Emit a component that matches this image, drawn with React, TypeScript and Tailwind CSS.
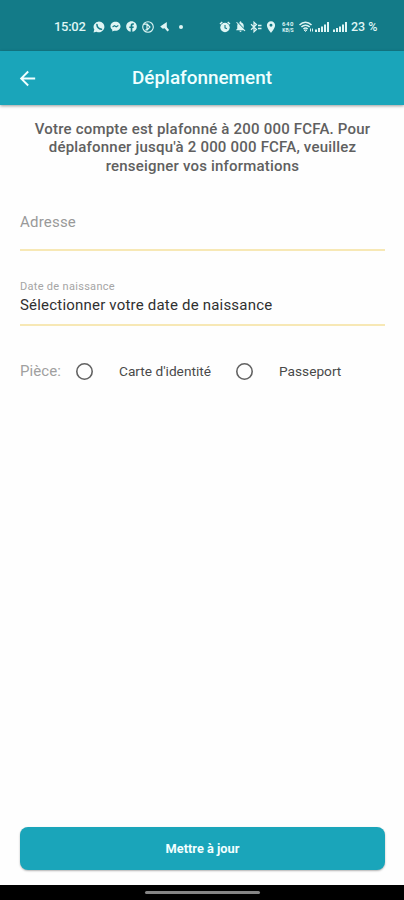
import React from 'react';
import {
  MdArrowBack,
  MdLocationOn,
  MdNotificationsOff,
} from 'react-icons/md';
import { FaFacebook } from 'react-icons/fa';

const SignalBars: React.FC = () => (
  <svg viewBox="0 0 15 10" className="w-[15px] h-[10px] shrink-0" fill="currentColor">
    <rect x="0" y="7.5" width="2" height="2.5" />
    <rect x="3" y="6" width="2" height="4" />
    <rect x="6" y="4.5" width="2" height="5.5" />
    <rect x="9" y="2.5" width="2" height="7.5" />
    <rect x="12" y="0" width="2" height="10" />
  </svg>
);

const StatusBar: React.FC = () => (
  <div className="h-[51px] shrink-0 bg-[#137b88] text-[#dff5f4] flex items-center pl-[54px] pt-[2px]">
    <span className="w-[39px] shrink-0 text-[13px] font-medium leading-none tracking-[-0.3px]">15:02</span>
    <div className="w-[126px] shrink-0 flex items-center gap-[5px]">
      {/* WhatsApp */}
      <svg viewBox="0 0 12 12" className="w-[12px] h-[12px]" fill="currentColor">
        <path d="M6 .5a5.4 5.4 0 1 1-2.5 10.2L.5 11.5l.8-2.9A5.4 5.4 0 0 1 6 .5z" />
        <path d="M3.9 3.4c.2 2.7 1.8 4.5 4.6 4.8" fill="none" stroke="#137b88" strokeWidth="1.5" strokeLinecap="round" />
      </svg>
      {/* Messenger */}
      <svg viewBox="0 0 12 12" className="w-[11px] h-[11px]" fill="currentColor">
        <path d="M6 .7c3.2 0 5.5 2.2 5.5 5s-2.3 5-5.5 5c-.6 0-1.1 0-1.6-.2l-1.9 1V9.600C1.200 8.700.5 7.300.5 5.700.5 2.900 2.800.7 6 .7z" />
        <path d="m2.8 6.6 2-1.500 2 1.200 2.300-1.300" fill="none" stroke="#137b88" strokeWidth="1.2" />
      </svg>
      <FaFacebook className="w-[11px] h-[11px]" />
      <svg viewBox="0 0 12 12" className="w-[12px] h-[12px]" fill="none" stroke="currentColor">
        <circle cx="6" cy="6" r="5.3" strokeWidth="1.1" />
        <path d="M2 3.2h3.2L7.900 6 5.200 8.800H3.400M5 3.800v4.400" strokeWidth="1.2" />
      </svg>
      <svg viewBox="0 0 12 12" className="w-[12px] h-[12px]" fill="currentColor">
        <path d="M1.200 5.500 7.800 1v6.300H5.500L3.800 7.800z" />
        <path d="m6.500 6.500 2.800 3.300" stroke="currentColor" strokeWidth="2.2" />
      </svg>
      <span className="w-[4px] h-[4px] ml-[3px] rounded-full bg-current" />
    </div>
    <div className="flex items-center">
      {/* alarm clock */}
      <svg viewBox="0 0 12 12" className="w-[12px] h-[12px] mr-[3px]" fill="currentColor">
        <circle cx="6" cy="6.5" r="4.7" />
        <path d="M1 3 3.300 1M11 3 8.700 1" stroke="currentColor" strokeWidth="1.4" />
        <path d="M6 4v2.800l1.900.9" fill="none" stroke="#137b88" strokeWidth="1.1" />
      </svg>
      <MdNotificationsOff className="w-[13px] h-[13px] mr-[3px]" />
      {/* bluetooth, connected */}
      <svg viewBox="0 0 12 12" className="w-[12px] h-[12px] mr-[2px]" fill="none" stroke="currentColor">
        <path d="M1 3.200 6.500 8.500 4 10.800V1.200l2.500 2.300L1 8.800" strokeWidth="1.2" />
        <path d="M8 4.500h3.500M8 7.500h3.500" strokeWidth="1.3" />
      </svg>
      <MdLocationOn className="w-[14px] h-[14px] mr-[3px]" />
      <span className="w-[14px] mr-[4px] flex flex-col items-center text-[6px] leading-[7px] font-bold">
        <span className="tracking-[0.5px]">640</span>
        <span className="text-[5px] leading-[6px]">KB/S</span>
      </span>
      <svg viewBox="0 0 15 12" className="w-[15px] h-[12px] mr-[1px]" fill="none" stroke="currentColor" strokeWidth="1.5">
        <path d="M.5 4C4 .3 9 .3 12.5 4M2.4 6c2.4-2.5 5.9-2.5 8.3 0M4.4 8c1.3-1.2 3-1.2 4.3 0" />
        <path d="m5.2 9 1.3 1.5L7.8 9zM11.5 7.5v3M13.5 7.5v3" strokeWidth="1" />
      </svg>
      <SignalBars />
      <span className="w-[3px]" />
      <SignalBars />
      <span className="ml-[3px] pt-[2px] text-[12.5px] font-medium leading-none whitespace-nowrap">23 %</span>
    </div>
  </div>
);

const Radio: React.FC = () => (
  <svg viewBox="0 0 17 17" className="w-[17px] h-[17px] shrink-0" fill="none">
    <circle cx="8.5" cy="8.5" r="7.7" stroke="#626262" strokeWidth="1.6" />
  </svg>
);

const App: React.FC = () => {
  return (
    <div className="w-[404px] h-[900px] bg-[#fefefe] font-['Roboto',sans-serif] flex flex-col overflow-hidden">
      <StatusBar />

      <header className="h-[54px] shrink-0 bg-[#1aa5ba] text-[#f0ffff] shadow-[0_1px_3px_rgba(0,0,0,0.4)] grid grid-cols-[60px_1fr_60px] items-center">
        <MdArrowBack className="w-[23px] h-[23px] ml-[16px]" />
        <h1 className="text-center text-[18.9px] font-medium leading-none">Déplafonnement</h1>
      </header>

      <main className="flex-1 flex flex-col pl-[20px] pr-[19px] pt-[15px]">
        <p className="text-center text-[15px] leading-[18.4px] font-medium text-[#606060] tracking-[0.2px] whitespace-nowrap">
          Votre compte est plafonné à 200 000 FCFA. Pour <br />
          déplafonner jusqu'à 2 000 000 FCFA, veuillez <br />
          renseigner vos informations
        </p>

        <div className="mt-[36px] h-[40px] border-b-2 border-[#f7e8b5] text-[15px] leading-[22px] tracking-[0.2px] text-[#999999]">
          Adresse
        </div>

        <div className="mt-[29px] h-[46px] border-b-2 border-[#f7e8b5]">
          <div className="text-[11px] leading-[14px] text-[#a5a5a5] tracking-[0.3px]">Date de naissance</div>
          <div className="text-[15px] leading-[23px] text-[#303030] tracking-[0.2px]">
            Sélectionner votre date de naissance
          </div>
        </div>

        <div className="mt-[35px] h-[20px] flex items-center text-[13.7px] text-[#494949]">
          <span className="w-[56px] text-[15px] text-[#a0a0a0] tracking-[0.1px]">Pièce:</span>
          <Radio />
          <span className="w-[117px] ml-[26px]">Carte d'identité</span>
          <Radio />
          <span className="ml-[26px]">Passeport</span>
        </div>

        <button className="mt-auto mb-[15px] h-[43px] pt-px shrink-0 rounded-[8px] bg-[#1aa5ba] text-[#f2ffff] text-[12.8px] font-bold shadow-[0_1px_2px_rgba(0,0,0,0.3)]">
          Mettre à jour
        </button>
      </main>

      <footer className="h-[15px] shrink-0 bg-black flex justify-center pt-[6px]">
        <span className="w-[115px] h-[3px] rounded-full bg-[#858585]" />
      </footer>
    </div>
  );
};

export default App;
